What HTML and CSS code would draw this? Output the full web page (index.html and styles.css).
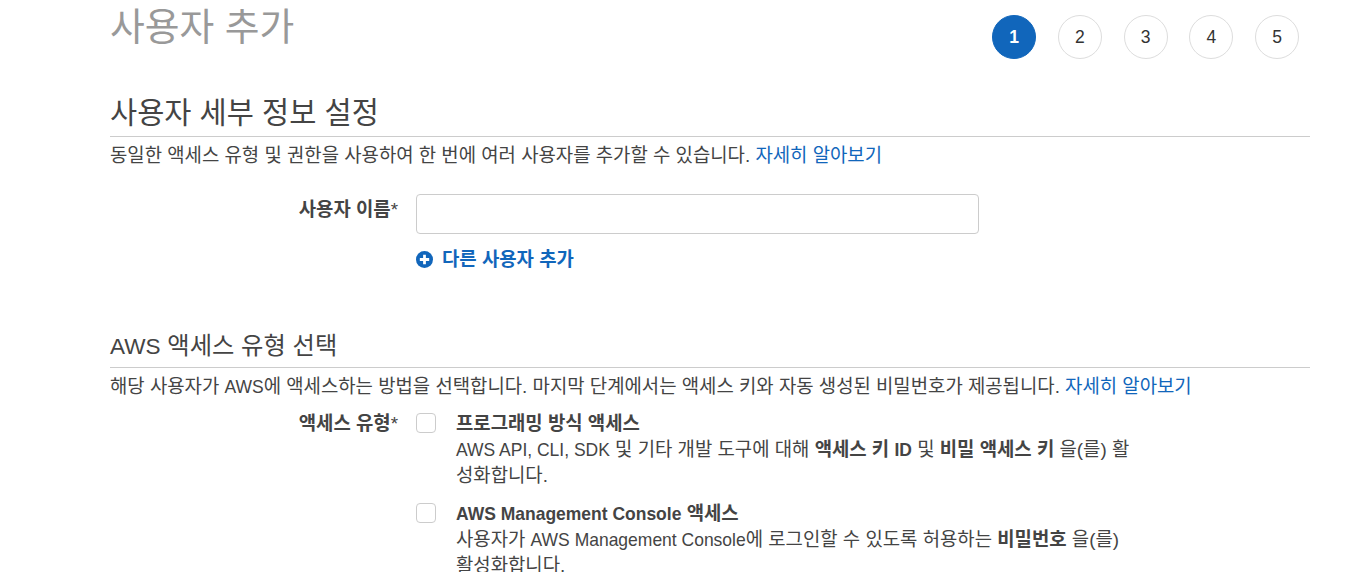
FILE: index.html
```html
<!DOCTYPE html>
<html lang="ko">
<head>
<meta charset="utf-8">
<title>사용자 추가</title>
<link rel="stylesheet" href="styles.css">
</head>
<body>
<main class="page">
  <header class="top">
    <h1 class="title">사용자 추가</h1>
    <ol class="steps">
      <li class="step active">1</li>
      <li class="step">2</li>
      <li class="step">3</li>
      <li class="step">4</li>
      <li class="step">5</li>
    </ol>
  </header>
  <section class="details">
    <h2 class="heading heading-lg">사용자 세부 정보 설정</h2>
    <p class="intro">동일한 액세스 유형 및 권한을 사용하여 한 번에 여러 사용자를 추가할 수 있습니다. <a href="#">자세히 알아보기</a></p>
    <div class="row name-row">
      <label class="label"><b>사용자 이름</b>*</label>
      <input class="text-input" type="text">
    </div>
    <a class="add" href="#">
      <svg class="plus" viewBox="0 0 16 16" width="17" height="17"><circle cx="8" cy="8" r="8" fill="#1166bb"/><path d="M8 3.6v8.8M3.6 8h8.8" stroke="#fff" stroke-width="2.6"/></svg>
      <span class="add-text">다른 사용자 추가</span>
    </a>
  </section>
  <section class="access">
    <h2 class="heading heading-sm"><span class="en">AWS</span> 액세스 유형 선택</h2>
    <p class="intro">해당 사용자가 <span class="en">AWS</span>에 액세스하는 방법을 선택합니다. 마지막 단계에서는 액세스 키와 자동 생성된 비밀번호가 제공됩니다. <a href="#">자세히 알아보기</a></p>
    <div class="row type-row">
      <label class="label"><b>액세스 유형</b>*</label>
      <div class="options">
        <div class="option">
          <span class="check"></span>
          <div class="option-text">
            <b class="option-title">프로그래밍 방식 액세스</b>
            <p><span class="en">AWS API, CLI, SDK</span> 및 기타 개발 도구에 대해 <b>액세스 키 <span class="en">ID</span></b> 및 <b>비밀 액세스 키</b> 을(를) 활성화합니다.</p>
          </div>
        </div>
        <div class="option">
          <span class="check"></span>
          <div class="option-text">
            <b class="option-title"><span class="en">AWS Management Console</span> 액세스</b>
            <p>사용자가 <span class="en">AWS Management Console</span>에 로그인할 수 있도록 허용하는 <b>비밀번호</b> 을(를) 활성화합니다.</p>
          </div>
        </div>
      </div>
    </div>
  </section>
</main>
</body>
</html>
```
FILE: styles.css
```css
* { box-sizing: border-box; }
html, body { margin: 0; height: 572px; overflow: hidden; background: #fff; }
body { font-family: "Liberation Sans", "Noto Sans CJK KR", sans-serif; font-size: 18.85px; color: #444; }
a { color: #1166bb; text-decoration: none; }
.en { font-size: 0.928em; }
.page { padding: 0 42px 0 110px; }
.top { display: flex; justify-content: space-between; height: 72px; }
.title { margin: 0; font-size: 37.8px; line-height: 54px; font-weight: 400; color: #999; }
.steps { list-style: none; margin: 15px 11px 0 0; padding: 0; display: flex; gap: 21.75px; }
.step { width: 44px; height: 44px; border-radius: 50%; border: 1px solid #ddd; display: flex; align-items: center; justify-content: center; color: #333; font-size: 17.5px; }
.step.active { background: #1166bb; border-color: #1166bb; color: #fff; font-weight: 700; }
.heading { margin: 0; font-weight: 400; color: #444; border-bottom: 1px solid #ccc; line-height: 40px; }
.heading-lg { font-size: 29.5px; padding: 21px 0 3px; }
.heading-sm { font-size: 24.3px; padding-top: 1px; }
.intro { margin: 7px 0 0; line-height: 24px; }
.row { display: flex; }
.label { width: 288px; text-align: right; margin-right: 18px; flex: none; }
.name-row { margin-top: 26px; }
.name-row .label { line-height: 31px; }
.text-input { width: 563px; height: 40px; border: 1px solid #ccc; border-radius: 4px; background: #fff; }
.add { display: flex; align-items: center; gap: 9px; margin: 14px 0 0 306px; font-weight: 700; line-height: 20px; }
.add-text { margin-top: 2px; }
.plus { flex: none; }
.access { margin-top: 55px; }
.type-row { margin-top: 12px; }
.options { width: 716px; }
.option { display: flex; gap: 20px; margin-bottom: 12px; }
.check { flex: none; width: 20px; height: 20px; border: 1px solid #ccc; border-radius: 4px; margin-top: 2px; }
.option-title { display: block; line-height: 26px; }
.option-text p { margin: 0; line-height: 26px; }
.type-row .label { line-height: 26px; }
```
